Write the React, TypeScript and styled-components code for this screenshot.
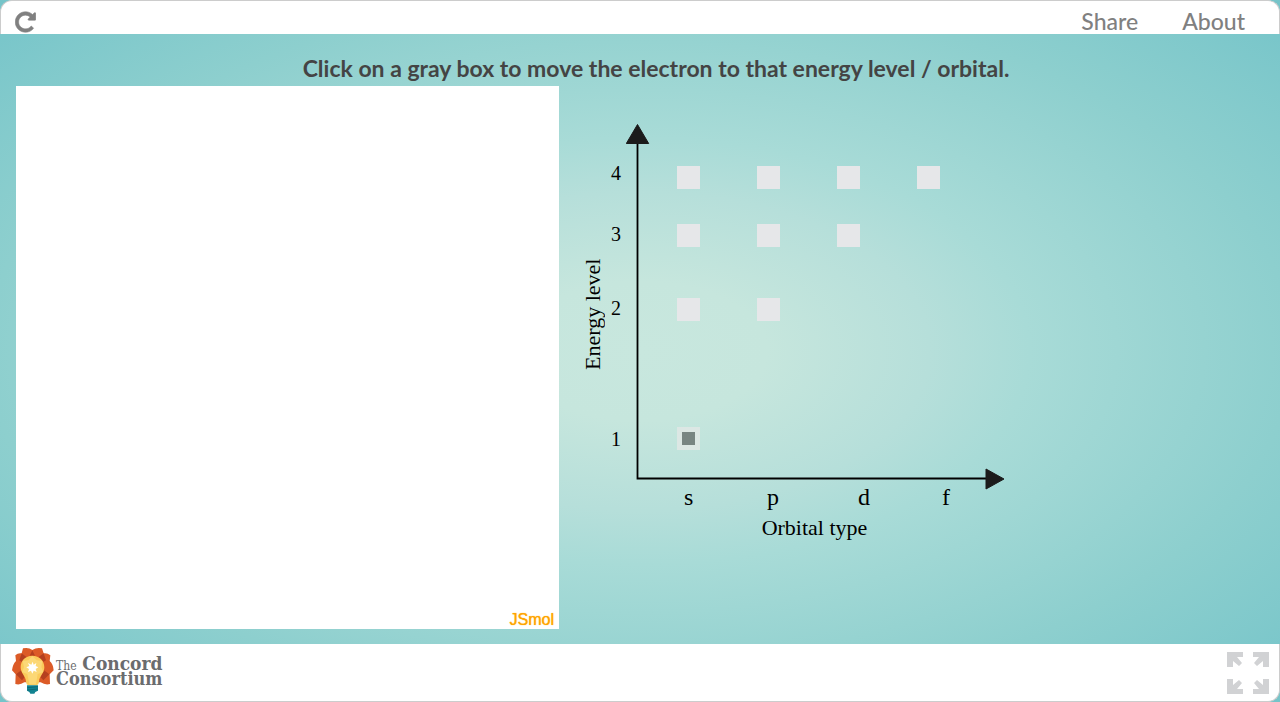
import React, { useState } from "react";
import styled, { createGlobalStyle } from "styled-components";

const GlobalStyle = createGlobalStyle`
  *, *::before, *::after { box-sizing: border-box; }
  body {
    margin: 0;
    font-family: Lato, "Liberation Sans", sans-serif;
  }
`;

const Page = styled.div`
  min-height: 100vh;
  display: flex;
  flex-direction: column;
  background: radial-gradient(
    ellipse farthest-corner at center,
    #c8e7de 0%,
    #c6e6dd 14%,
    #b6dfda 32%,
    #a8dbd7 43%,
    #8dcfce 72%,
    #75c4c9 100%
  );
`;

const TopBar = styled.header`
  height: 34px;
  padding: 0 34px 0 14px;
  display: flex;
  align-items: flex-end;
  justify-content: space-between;
  background: #fff;
  border: 1px solid #ccc;
  border-bottom: 0;
  border-radius: 12px 12px 0 0;
`;

const IconButton = styled.button`
  display: block;
  padding: 0;
  border: 0;
  background: none;
  color: ${(p) => p.color};
  cursor: pointer;

  svg {
    display: block;
    fill: currentColor;
  }
`;

const TopLinks = styled.nav`
  display: flex;
  gap: 44px;
`;

const TopLink = styled.a`
  color: #808080;
  font-size: 23px;
  font-weight: 500;
  line-height: 26px;
  text-decoration: none;
`;

const Main = styled.main`
  flex: 1;
  padding: 16px 16px 15px;
`;

const Title = styled.h1`
  margin: 0;
  padding-left: 32px;
  color: #444;
  font-size: 23px;
  font-weight: 700;
  line-height: 36px;
  text-align: center;
`;

const Workspace = styled.div`
  display: flex;
  gap: 24px;
`;

const Viewer = styled.section`
  flex: none;
  height: calc(100vh - 159px);
  aspect-ratio: 1;
  padding: 0 5px;
  display: flex;
  align-items: flex-end;
  justify-content: flex-end;
  background: #fff;
`;

const ViewerLink = styled.a`
  color: orange;
  font-family: "Liberation Sans", Arial, sans-serif;
  font-size: 16px;
  line-height: 18px;
  text-decoration: none;
  text-shadow: 0 0 1px orange;
`;

const Chart = styled.section`
  position: relative;
  width: 424px;
  padding-top: 38px;
  display: grid;
  grid-template-columns: 24px 30px 370px;
  grid-template-rows: 354px 36px 28px;
  align-content: start;
  color: #000;
  font-family: "Liberation Serif", "Times New Roman", serif;
  font-size: 22px;
`;

const Axes = styled.svg`
  position: absolute;
  top: 38px;
  left: 43px;
  pointer-events: none;
`;

const EnergyAxisTitle = styled.div`
  writing-mode: vertical-rl;
  transform: rotate(180deg);
  padding-top: 108px;
  line-height: 20px;
  white-space: nowrap;
`;

const EnergyTicks = styled.div`
  padding: 37px 0 0 4px;
  display: grid;
  grid-template-rows: 61px 74px 131px 24px;
  align-content: start;
  font-size: 20px;
  line-height: 24px;
`;

const Levels = styled.div`
  padding: 42px 0 0 40px;
  display: grid;
  grid-template-rows: 58px 74px 129px 23px;
  align-content: start;
`;

const Level = styled.div`
  display: flex;
  gap: 57px;
`;

const OrbitalButton = styled.button<{ $selected: boolean }>`
  width: 23px;
  height: 23px;
  padding: 0;
  border: ${(p) => (p.$selected ? "5px solid #dce7e4" : "0")};
  background: ${(p) => (p.$selected ? "#788582" : "#e6e7e9")};
  cursor: pointer;
`;

const OrbitalTicks = styled.div`
  grid-column: 3;
  padding: 3px 0 0 47px;
  display: grid;
  grid-template-columns: 83px 91px 84px 1fr;
  font-size: 24px;
  line-height: 32px;
`;

const OrbitalAxisTitle = styled.div`
  grid-column: 3;
  padding-right: 15px;
  line-height: 28px;
  text-align: center;
`;

const Footer = styled.footer`
  height: 58px;
  padding: 0 10px 0 11px;
  display: flex;
  align-items: center;
  justify-content: space-between;
  background: #fff;
  border: 1px solid #ccc;
  border-top: 0;
  border-radius: 0 0 12px 12px;
`;

const Brand = styled.a`
  display: flex;
  align-items: center;
  gap: 2px;
  padding-bottom: 4px;
  color: #6b6c6e;
  font-family: "DejaVu Serif Condensed", "DejaVu Serif", serif;
  font-weight: 700;
  text-decoration: none;
`;

const BrandName = styled.span`
  display: flex;
  flex-direction: column;
  font-size: 18px;
  line-height: 15px;
`;

const BrandTop = styled.span`
  display: flex;
  align-items: baseline;
  justify-content: space-between;
  font-size: 19px;
`;

const BrandSmall = styled.span`
  font-size: 12px;
  font-weight: 400;
  line-height: 10px;
`;

const orbitals = ["s", "p", "d", "f"];
const energyLevels = [4, 3, 2, 1];
const arrow = "M0 0H16V5H10L15 11L12 14L6 9V15H0Z";

function ReloadIcon() {
  return (
    <svg width="21" height="24" viewBox="0 0 1536 1792" aria-hidden="true">
      <path d="M1536 256v448q0 26-19 45t-45 19h-448q-42 0-59-40-17-39 14-69l138-138q-148-137-349-137-104 0-198.500 40.500t-163.500 109.500-109.500 163.500-40.500 198.500 40.500 198.500 109.500 163.500 163.500 109.500 198.500 40.500q119 0 225-52t179-147q7-10 23-12 14 0 25 9l137 138q9 8 9.500 20.500t-7.500 22.500q-109 132-264 204.500t-327 72.500q-156 0-298-61t-245-164-164-245-61-298 61-298 164-245 245-164 298-61q147 0 284.500 55.500t244.500 156.500l130-129q29-31 70-14 39 17 39 59z" stroke="currentColor" strokeWidth="40" />
    </svg>
  );
}

function BulbLogo() {
  return (
    <svg width="42" height="47" viewBox="36 82 126 141" aria-hidden="true">
      <path fill="#dc5b27" d="M69 86Q86 82 97 91Q110 82 126 86L131 101Q142 99 151 107L149 124Q160 134 161 152L149 164L150 193Q136 197 122 188H73Q60 197 46 193L47 164L36 152Q38 134 48 124L46 107Q54 99 65 101Z" />
      <path fill="#b5401f" d="M97 92L105 108H89ZM65 101L80 113L66 127L58 122ZM131 101L115 113L129 127L138 122ZM48 164L64 152L74 172L66 182ZM148 164L132 152L121 172L130 182Z" />
      <path fill="#fbcb5b" d="M97 108C76 108 62 123 62 143C62 161 77 169 78 186Q79 195 84 197H111Q116 195 117 186C118 169 133 161 133 143C133 123 118 108 97 108Z" />
      <path fill="#fcd876" d="M97 109L110 122L127 124L124 142L130 157L113 163L108 194H88L82 163L66 157L72 142L68 124L85 122Z" />
      <path fill="#fff" d="M98 126L101 135L109 130L107 139L115 143L107 148L110 157L101 153L97 162L93 153L84 157L87 148L79 143L88 139L84 130L94 135Z" />
      <path fill="#128391" d="M81 197H114V213L106 217L103 222H91L88 217L81 213Z" />
      <path stroke="#0a5c69" strokeWidth="2" d="M82 204L114 201M82 211L114 208" />
    </svg>
  );
}

function FullscreenIcon() {
  return (
    <svg width="42" height="42" viewBox="0 0 42 42" aria-hidden="true">
      <path d={arrow} />
      <path d={arrow} transform="translate(42 0) scale(-1 1)" />
      <path d={arrow} transform="translate(0 42) scale(1 -1)" />
      <path d={arrow} transform="translate(42 42) scale(-1 -1)" />
    </svg>
  );
}

function OrbitalChart() {
  const [selected, setSelected] = useState("1s");
  return (
    <Chart aria-label="Energy level by orbital type">
      <Axes width="380" height="366" viewBox="0 0 380 366" aria-hidden="true">
        <path d="M11.500 16V354.500H361" fill="none" stroke="#000" strokeWidth="1.800" />
        <path d="M11.500 .5L22.700 19.500H.3Z M360 345L378 355L360 365Z" fill="#1b1b1b" stroke="#1b1b1b" strokeLinejoin="round" />
      </Axes>
      <EnergyAxisTitle>Energy level</EnergyAxisTitle>
      <EnergyTicks>
        {energyLevels.map((n) => (
          <span key={n}>{n}</span>
        ))}
      </EnergyTicks>
      <Levels>
        {energyLevels.map((n) => (
          <Level key={n}>
            {orbitals.slice(0, n).map((o) => (
              <OrbitalButton
                key={o}
                type="button"
                aria-label={`${n}${o}`}
                aria-pressed={selected === `${n}${o}`}
                $selected={selected === `${n}${o}`}
                onClick={() => setSelected(`${n}${o}`)}
              />
            ))}
          </Level>
        ))}
      </Levels>
      <OrbitalTicks>
        {orbitals.map((o) => (
          <span key={o}>{o}</span>
        ))}
      </OrbitalTicks>
      <OrbitalAxisTitle>Orbital type</OrbitalAxisTitle>
    </Chart>
  );
}

export default function App() {
  return (
    <>
      <GlobalStyle />
      <Page>
        <TopBar>
          <IconButton type="button" color="#808080" aria-label="Reload">
            <ReloadIcon />
          </IconButton>
          <TopLinks>
            <TopLink href="#share">Share</TopLink>
            <TopLink href="#about">About</TopLink>
          </TopLinks>
        </TopBar>
        <Main>
          <Title>Click on a gray box to move the electron to that energy level / orbital.</Title>
          <Workspace>
            <Viewer aria-label="Orbital model">
              <ViewerLink href="#jsmol">JSmol</ViewerLink>
            </Viewer>
            <OrbitalChart />
          </Workspace>
        </Main>
        <Footer>
          <Brand href="#concord">
            <BulbLogo />
            <BrandName>
              <BrandTop>
                <BrandSmall>The</BrandSmall> Concord
              </BrandTop>
              Consortium
            </BrandName>
          </Brand>
          <IconButton type="button" color="#d1d2d4" aria-label="Full screen">
            <FullscreenIcon />
          </IconButton>
        </Footer>
      </Page>
    </>
  );
}
